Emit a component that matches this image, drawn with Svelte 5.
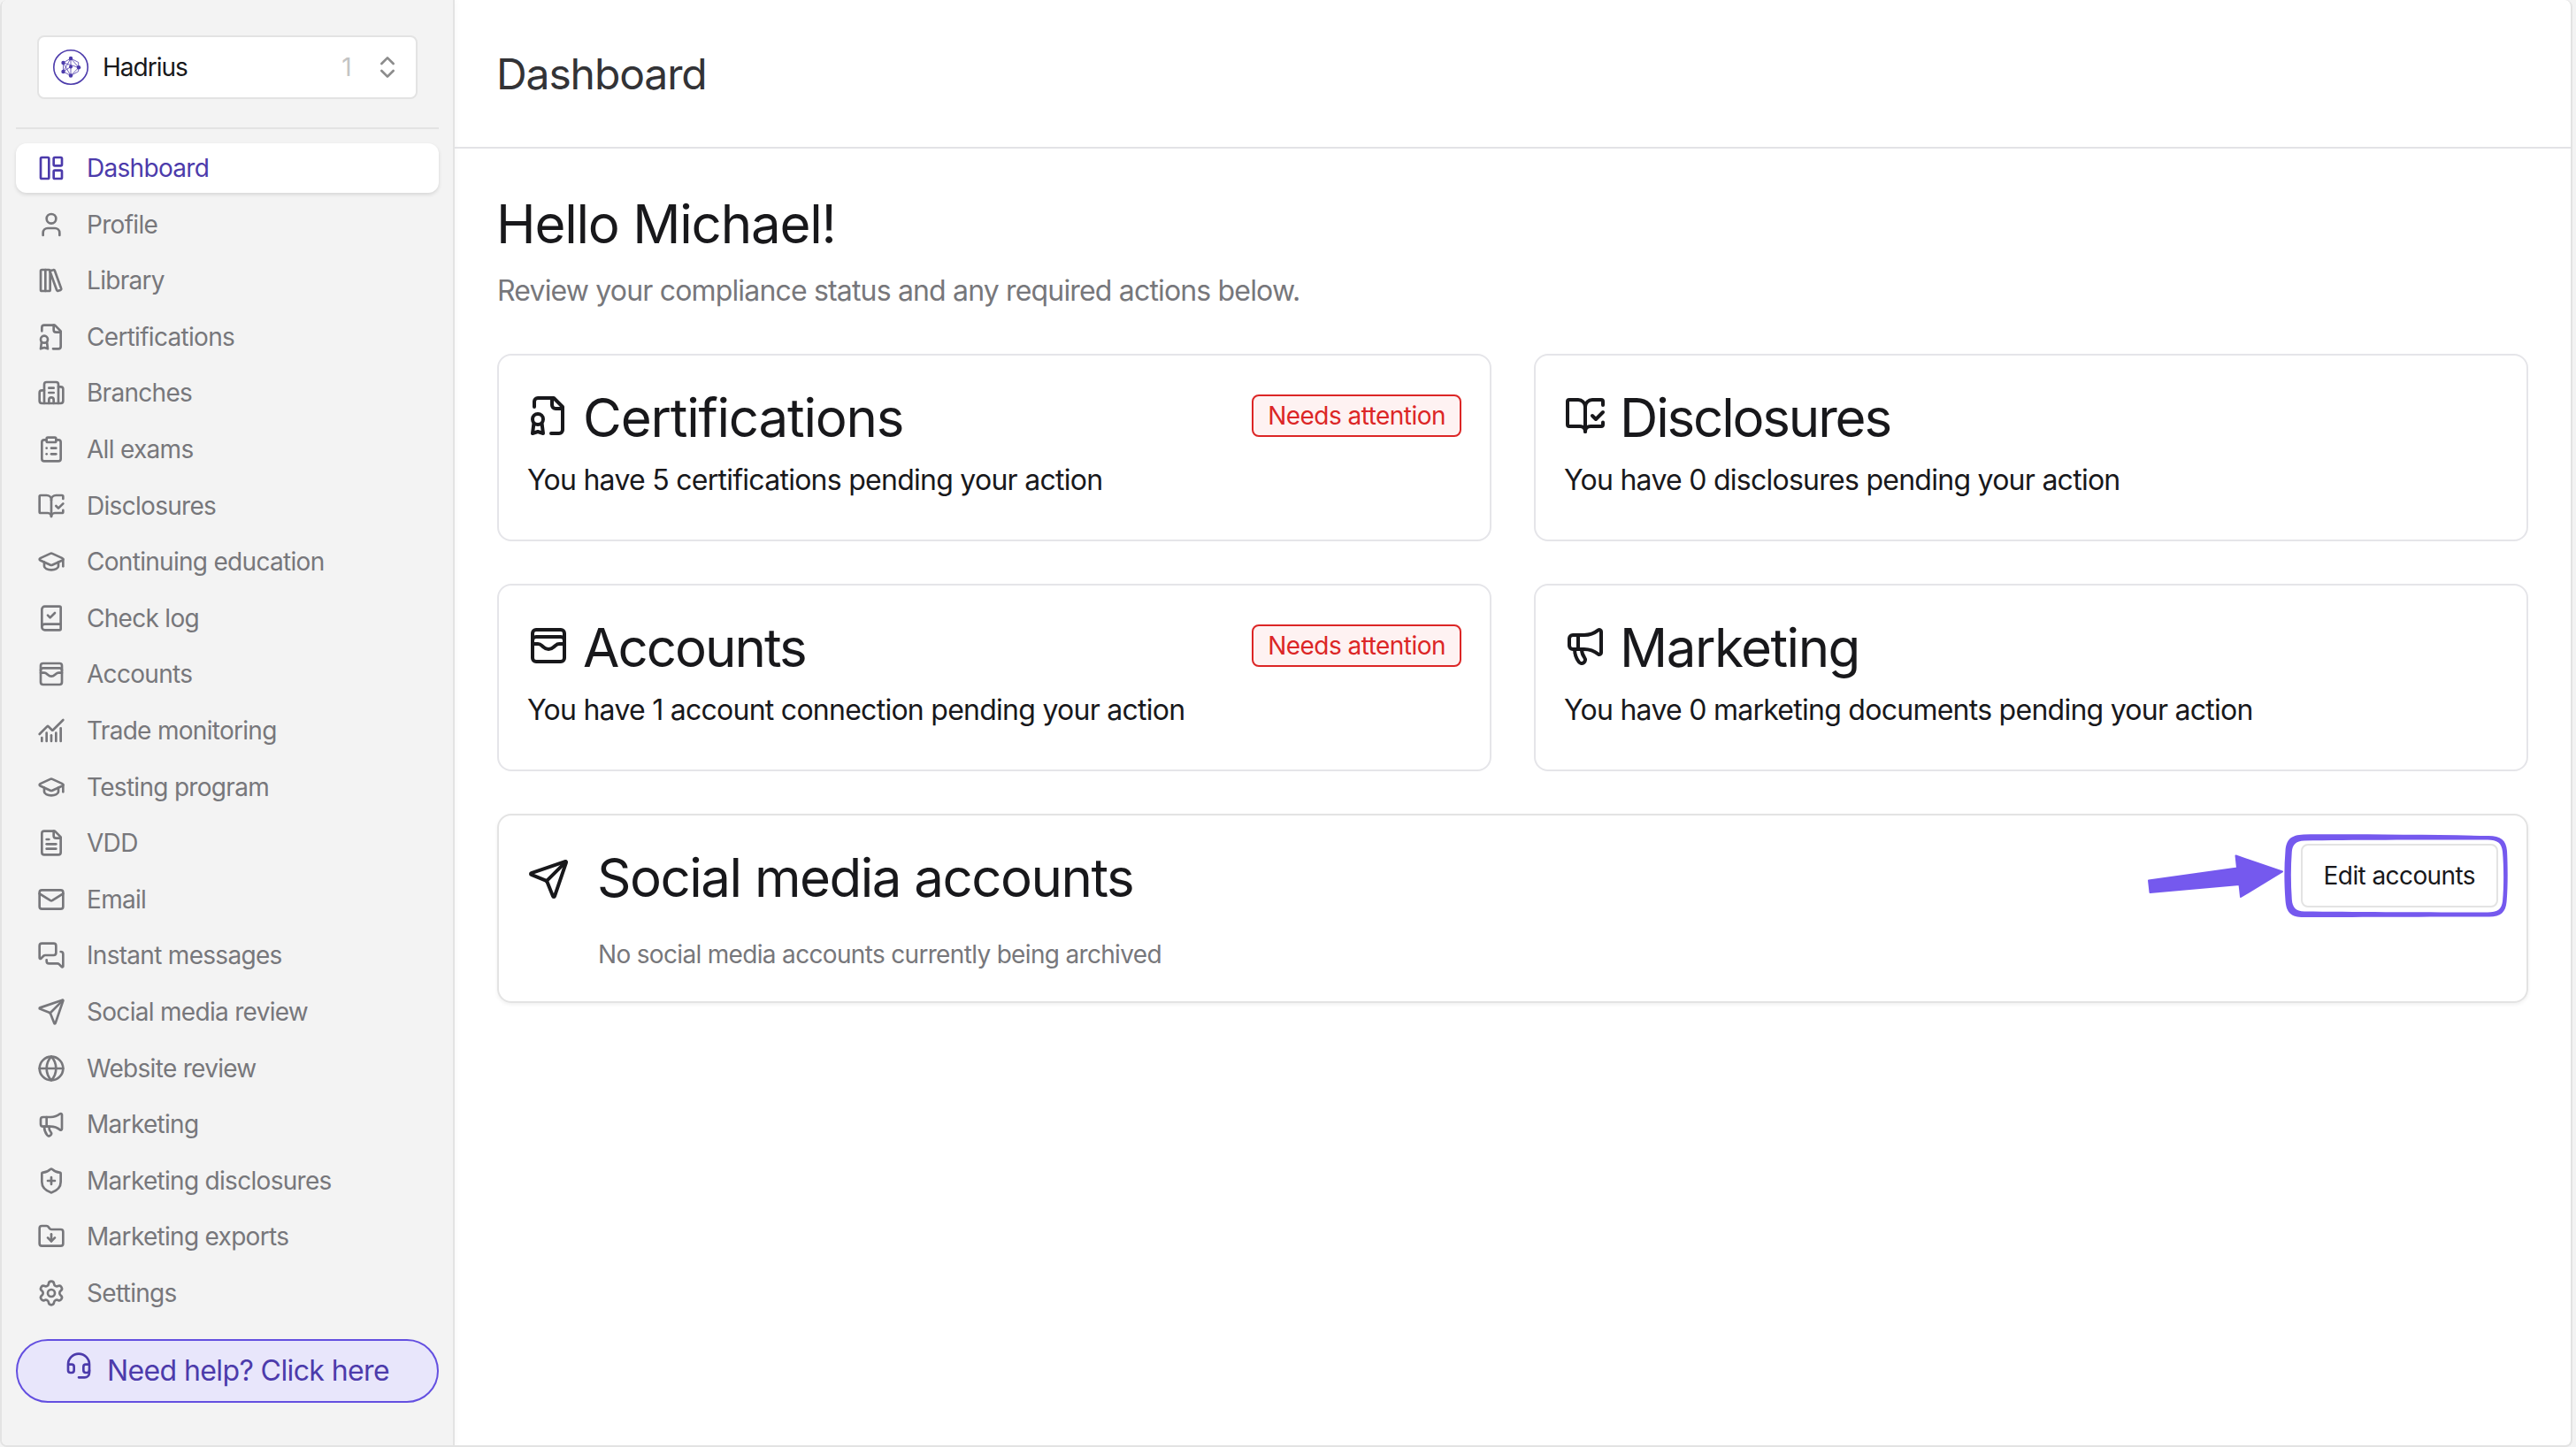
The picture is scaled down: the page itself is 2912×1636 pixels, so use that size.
<script lang="ts">
  interface NavItem {
    label: string;
    icon: string;
  }

  interface Card {
    key: string;
    title: string;
    icon: string;
    text: string;
    attention?: boolean;
  }

  const icons: Record<string, string[]> = {
    dashboard: [
      'M4 3h5a1 1 0 0 1 1 1v16a1 1 0 0 1-1 1H4a1 1 0 0 1-1-1V4a1 1 0 0 1 1-1z',
      'M15 3h5a1 1 0 0 1 1 1v5a1 1 0 0 1-1 1h-5a1 1 0 0 1-1-1V4a1 1 0 0 1 1-1z',
      'M15 14h5a1 1 0 0 1 1 1v5a1 1 0 0 1-1 1h-5a1 1 0 0 1-1-1v-5a1 1 0 0 1 1-1z',
    ],
    user: ['M19 21v-2a4 4 0 0 0-4-4H9a4 4 0 0 0-4 4v2', 'M16 7a4 4 0 1 1-8 0 4 4 0 0 1 8 0z'],
    library: [
      'M4 3h6a1 1 0 0 1 1 1v16a1 1 0 0 1-1 1H4a1 1 0 0 1-1-1V4a1 1 0 0 1 1-1z',
      'M7 3v18',
      'M20.4 18.9c.2.5-.1 1.1-.6 1.3l-1.9.7c-.5.2-1.1-.1-1.3-.6L11.1 5.1c-.2-.5.1-1.1.6-1.3l1.9-.7c.5-.2 1.1.1 1.3.6Z',
    ],
    badge: [
      'M13.5 22H18a2 2 0 0 0 2-2V7l-5-5H6a2 2 0 0 0-2 2v3',
      'M14 2v4a2 2 0 0 0 2 2h4',
      'M9 14a3 3 0 1 1-6 0 3 3 0 0 1 6 0z',
      'M8.3 16.5 9 22l-3-1-3 1 .7-5.5',
    ],
    building: [
      'M10 12h4',
      'M10 8h4',
      'M14 21v-3a2 2 0 0 0-4 0v3',
      'M6 10H4a2 2 0 0 0-2 2v7a2 2 0 0 0 2 2h16a2 2 0 0 0 2-2V9a2 2 0 0 0-2-2h-2',
      'M6 21V5a2 2 0 0 1 2-2h8a2 2 0 0 1 2 2v16',
    ],
    clipboard: [
      'M9 2h6a1 1 0 0 1 1 1v2a1 1 0 0 1-1 1H9a1 1 0 0 1-1-1V3a1 1 0 0 1 1-1z',
      'M16 4h2a2 2 0 0 1 2 2v14a2 2 0 0 1-2 2H6a2 2 0 0 1-2-2V6a2 2 0 0 1 2-2h2',
      'M12 11h4',
      'M12 16h4',
      'M8 11h.01',
      'M8 16h.01',
    ],
    bookOpen: [
      'M12 21V7',
      'm16 12 2 2 4-4',
      'M22 6V4a1 1 0 0 0-1-1h-5a4 4 0 0 0-4 4 4 4 0 0 0-4-4H3a1 1 0 0 0-1 1v13a1 1 0 0 0 1 1h6a3 3 0 0 1 3 3 3 3 0 0 1 3-3h6a1 1 0 0 0 1-1v-1.3',
    ],
    cap: [
      'M21.42 10.922a1 1 0 0 0-.019-1.838L12.83 5.18a2 2 0 0 0-1.66 0L2.6 9.08a1 1 0 0 0 0 1.832l8.57 3.908a2 2 0 0 0 1.66 0z',
      'M22 10v6',
      'M6 12.5V16a6 3 0 0 0 12 0v-3.5',
    ],
    bookCheck: [
      'M4 19.5v-15A2.5 2.5 0 0 1 6.5 2H19a1 1 0 0 1 1 1v18a1 1 0 0 1-1 1H6.5a1 1 0 0 1 0-5H20',
      'm9 9.5 2 2 4-4',
    ],
    wallet: [
      'M5 3h14a2 2 0 0 1 2 2v14a2 2 0 0 1-2 2H5a2 2 0 0 1-2-2V5a2 2 0 0 1 2-2z',
      'M3 9a2 2 0 0 1 2-2h14a2 2 0 0 1 2 2',
      'M3 11h3c.8 0 1.6.3 2.1.9l1.1.9c1.6 1.6 4.1 1.6 5.7 0l1.1-.9c.5-.5 1.3-.9 2.1-.9H21',
    ],
    chart: [
      'M12 16v5',
      'M16 14v7',
      'M20 10v11',
      'm22 3-8.646 8.646a.5.5 0 0 1-.708 0L9.354 8.354a.5.5 0 0 0-.707 0L2 15',
      'M4 18v3',
      'M8 14v7',
    ],
    file: [
      'M15 2H6a2 2 0 0 0-2 2v16a2 2 0 0 0 2 2h12a2 2 0 0 0 2-2V7Z',
      'M14 2v4a2 2 0 0 0 2 2h4',
      'M10 9H8',
      'M16 13H8',
      'M16 17H8',
    ],
    mail: [
      'M4 4h16a2 2 0 0 1 2 2v12a2 2 0 0 1-2 2H4a2 2 0 0 1-2-2V6a2 2 0 0 1 2-2z',
      'm22 7-8.991 5.727a2 2 0 0 1-2.009 0L2 7',
    ],
    messages: [
      'M16 10a2 2 0 0 1-2 2H6.828a2 2 0 0 0-1.414.586l-2.202 2.202A.71.71 0 0 1 2 14.286V4a2 2 0 0 1 2-2h10a2 2 0 0 1 2 2z',
      'M20 9a2 2 0 0 1 2 2v10.286a.71.71 0 0 1-1.212.502l-2.202-2.202A2 2 0 0 0 17.172 19H10a2 2 0 0 1-2-2v-1',
    ],
    send: [
      'M14.536 21.686a.5.5 0 0 0 .937-.024l6.5-19a.496.496 0 0 0-.635-.635l-19 6.5a.5.5 0 0 0-.024.937l7.93 3.18a2 2 0 0 1 1.112 1.11z',
      'm21.854 2.147-10.94 10.939',
    ],
    globe: [
      'M22 12a10 10 0 1 1-20 0 10 10 0 0 1 20 0z',
      'M12 2a14.5 14.5 0 0 0 0 20 14.5 14.5 0 0 0 0-20',
      'M2 12h20',
    ],
    megaphone: [
      'M11 6a13 13 0 0 0 8.4-2.8A1 1 0 0 1 21 4v12a1 1 0 0 1-1.6.8A13 13 0 0 0 11 14H5a2 2 0 0 1-2-2V8a2 2 0 0 1 2-2z',
      'M6 14a12 12 0 0 0 2.4 7.2 2 2 0 0 0 3.2-2.4A8 8 0 0 1 10 14',
      'M8 6v8',
    ],
    shield: [
      'M20 13c0 5-3.5 7.5-7.66 8.95a1 1 0 0 1-.67-.01C7.5 20.5 4 18 4 13V6a1 1 0 0 1 1-1c2 0 4.5-1.2 6.24-2.72a1.17 1.17 0 0 1 1.52 0C14.51 3.81 17 5 19 5a1 1 0 0 1 1 1z',
      'M9 12h6',
      'M12 9v6',
    ],
    folder: [
      'M20 20a2 2 0 0 0 2-2V8a2 2 0 0 0-2-2h-7.9a2 2 0 0 1-1.69-.9L9.6 3.9A2 2 0 0 0 7.93 3H4a2 2 0 0 0-2 2v13a2 2 0 0 0 2 2Z',
      'M12 10v6',
      'm15 13-3 3-3-3',
    ],
    settings: [
      'M9.671 4.136a2.34 2.34 0 0 1 4.659 0 2.34 2.34 0 0 0 3.319 1.915 2.34 2.34 0 0 1 2.33 4.033 2.34 2.34 0 0 0 0 3.831 2.34 2.34 0 0 1-2.33 4.033 2.34 2.34 0 0 0-3.319 1.915 2.34 2.34 0 0 1-4.659 0 2.34 2.34 0 0 0-3.32-1.915 2.34 2.34 0 0 1-2.33-4.033 2.34 2.34 0 0 0 0-3.831A2.34 2.34 0 0 1 6.35 6.051a2.34 2.34 0 0 0 3.319-1.915',
      'M15 12a3 3 0 1 1-6 0 3 3 0 0 1 6 0z',
    ],
    headset: [
      'M3 11h3a2 2 0 0 1 2 2v3a2 2 0 0 1-2 2H5a2 2 0 0 1-2-2v-5Zm0 0a9 9 0 1 1 18 0m0 0v5a2 2 0 0 1-2 2h-1a2 2 0 0 1-2-2v-3a2 2 0 0 1 2-2h3Z',
      'M21 16v2a4 4 0 0 1-4 4h-5',
    ],
    chevrons: ['m7 15 5 5 5-5', 'm7 9 5-5 5 5'],
  };

  const navItems: NavItem[] = [
    { label: 'Dashboard', icon: 'dashboard' },
    { label: 'Profile', icon: 'user' },
    { label: 'Library', icon: 'library' },
    { label: 'Certifications', icon: 'badge' },
    { label: 'Branches', icon: 'building' },
    { label: 'All exams', icon: 'clipboard' },
    { label: 'Disclosures', icon: 'bookOpen' },
    { label: 'Continuing education', icon: 'cap' },
    { label: 'Check log', icon: 'bookCheck' },
    { label: 'Accounts', icon: 'wallet' },
    { label: 'Trade monitoring', icon: 'chart' },
    { label: 'Testing program', icon: 'cap' },
    { label: 'VDD', icon: 'file' },
    { label: 'Email', icon: 'mail' },
    { label: 'Instant messages', icon: 'messages' },
    { label: 'Social media review', icon: 'send' },
    { label: 'Website review', icon: 'globe' },
    { label: 'Marketing', icon: 'megaphone' },
    { label: 'Marketing disclosures', icon: 'shield' },
    { label: 'Marketing exports', icon: 'folder' },
    { label: 'Settings', icon: 'settings' },
  ];

  const cards: Card[] = [
    {
      key: 'certifications',
      title: 'Certifications',
      icon: 'badge',
      text: 'You have 5 certifications pending your action',
      attention: true,
    },
    {
      key: 'disclosures',
      title: 'Disclosures',
      icon: 'bookOpen',
      text: 'You have 0 disclosures pending your action',
    },
    {
      key: 'accounts',
      title: 'Accounts',
      icon: 'wallet',
      text: 'You have 1 account connection pending your action',
      attention: true,
    },
    {
      key: 'marketing',
      title: 'Marketing',
      icon: 'megaphone',
      text: 'You have 0 marketing documents pending your action',
    },
  ];

  let active = $state('Dashboard');
</script>

{#snippet icon(name: string, size: number)}
  <svg class="icon" width={size} height={size} viewBox="0 0 24 24">
    {#each icons[name] as d}
      <path {d} />
    {/each}
  </svg>
{/snippet}

<div class="app">
  <aside class="sidebar">
    <button class="org">
      <svg class="logo" width="40" height="40" viewBox="0 0 40 40">
        <circle class="ring" cx="20" cy="20" r="19.2" />
        <path class="mesh" d="M20 10 11.5 15v10l8.5 4.5 8.7-4.8V14.5zM20 10v19.5M20 10l9 10.3-9 9.2M11.5 15l17.5 5.3M11.5 25 20 10M11.5 15 20 29.5M11.5 25l8.5-5.5" />
        <circle cx="20" cy="10" r="2.2" />
        <circle cx="11.5" cy="15" r="2.2" />
        <circle cx="11.5" cy="25" r="2.2" />
        <circle cx="20" cy="29.5" r="2.2" />
        <circle cx="29" cy="20.3" r="2.2" />
        <circle cx="20" cy="19.5" r="2" />
      </svg>
      <span class="org-name">Hadrius</span>
      <span class="org-count">1</span>
      {@render icon('chevrons', 32)}
    </button>

    <nav class="nav">
      {#each navItems as item (item.label)}
        <button
          class="nav-item"
          class:active={active === item.label}
          onclick={() => (active = item.label)}
        >
          {@render icon(item.icon, 32)}
          <span>{item.label}</span>
        </button>
      {/each}
    </nav>

    <button class="help">
      {@render icon('headset', 32)}
      <span>Need help? Click here</span>
    </button>
  </aside>

  <div class="page">
    <header class="topbar">
      <h1>Dashboard</h1>
    </header>

    <main class="content">
      <h2 class="greeting">Hello Michael!</h2>
      <p class="intro">Review your compliance status and any required actions below.</p>

      <div class="cards">
        {#each cards as card (card.key)}
          <section class="card">
            <div class="card-head">
              {@render icon(card.icon, 48)}
              <h3 class="card-title {card.key}">{card.title}</h3>
              {#if card.attention}
                <span class="attention">Needs attention</span>
              {/if}
            </div>
            <p class="card-text">{card.text}</p>
          </section>
        {/each}

        <section class="card social">
          <div class="social-head">
            {@render icon('send', 48)}
            <h3 class="card-title">Social media accounts</h3>
            <button class="edit">Edit accounts</button>
          </div>
          <p class="social-text">No social media accounts currently being archived</p>

          <!-- hand-drawn arrow and frame around the edit button -->
          <svg class="callout" width="420" height="110" viewBox="0 0 420 110">
            <path
              class="arrow"
              d="M9 57.5 109 43.5 107.5 29.5 160 47.5 113 76 111.5 62 10.5 71z"
            />
            <path
              fill-rule="evenodd"
              d="M184 5.500 C240 5 330 6 393 7 C407 7 413 12 414 24 C415 42 415 66 413.500 82 C412.500 93 407 98.500 394 98.500 C330 98.500 240 99 184 99 C170 99 164.500 94 163.500 80 C162 60 162 42 163.500 24 C164.500 11 170 6 184 5.500 Z M185 12.500 C240 11.500 330 11.500 392 11.500 C403 11.500 408 15 409 25 C410.500 42 410.500 66 409 81 C408 90 403 93.500 392 93.500 C330 93.500 240 93 185 92.500 C175 92 171.500 88 170.800 79 C169.500 60 169.500 42 170.800 25 C171.500 17 175 13 185 12.500 Z"
            />
          </svg>
        </section>
      </div>
    </main>
  </div>
</div>

<style>
  :global(body) {
    margin: 0;
    background: #f3f3f3;
  }

  .app {
    display: flex;
    box-sizing: border-box;
    width: 2908px;
    height: 1636px;
    border: 2px solid #e3e3e3;
    border-top: none;
    border-radius: 8px;
    overflow: hidden;
    background: #fff;
    color: #18181b;
    font-family: Inter, 'Liberation Sans', sans-serif;
    font-size: 28px;
    letter-spacing: -0.7px;
  }

  button {
    margin: 0;
    font: inherit;
    letter-spacing: inherit;
    color: inherit;
    text-align: left;
    cursor: pointer;
  }

  h1,
  h2,
  h3,
  p {
    margin: 0;
    font-weight: 400;
  }

  .icon {
    flex-shrink: 0;
    fill: none;
    stroke: currentColor;
    stroke-width: 2;
    stroke-linecap: round;
    stroke-linejoin: round;
  }

  .sidebar {
    display: flex;
    flex-direction: column;
    box-sizing: border-box;
    flex-shrink: 0;
    width: 512px;
    padding: 40px 16px 0;
    border-right: 2px solid #e3e3e3;
    background: #f3f3f3;
    box-shadow: 0 0 8px rgba(0, 0, 0, 0.05);
  }

  .org {
    display: flex;
    align-items: center;
    box-sizing: border-box;
    height: 72px;
    margin: 0 24px 32px;
    padding: 0 16px;
    border: 2px solid #e3e3e3;
    border-radius: 8px;
    background: #fff;
  }

  .logo {
    flex-shrink: 0;
    fill: #4c3bab;
  }

  .ring,
  .mesh {
    fill: none;
    stroke: #4c3bab;
    stroke-width: 1.6;
  }

  .mesh {
    stroke-width: 0.8;
  }

  .org-name {
    flex: 1;
    margin-left: 16px;
    letter-spacing: -0.035em;
  }

  .org-count {
    margin-right: 25px;
    color: #c4c4c4;
  }

  .org .icon {
    color: #8c8c8c;
  }

  .nav {
    display: flex;
    flex-direction: column;
    gap: 7.6px;
    padding-top: 16px;
    border-top: 2px solid #e3e3e3;
  }

  .nav-item {
    display: flex;
    align-items: center;
    gap: 24px;
    height: 56px;
    padding: 0 24px;
    border: none;
    border-radius: 12px;
    background: none;
    color: #77777b;
  }

  .nav-item.active {
    background: #fff;
    color: #4c3bab;
    box-shadow: 0 2px 4px rgba(0, 0, 0, 0.12);
  }

  .help {
    display: flex;
    align-items: center;
    box-sizing: border-box;
    gap: 16px;
    height: 72px;
    margin-top: 24px;
    padding: 0 53px;
    border: 2px solid #634fe0;
    border-radius: 36px;
    background: #e8e6fb;
    color: #4c3bab;
    font-size: 32px;
    letter-spacing: -0.019em;
  }

  .help .icon {
    margin-bottom: 12px;
  }

  .page {
    flex: 1;
    min-width: 0;
  }

  .topbar {
    display: flex;
    align-items: center;
    box-sizing: border-box;
    height: 168px;
    padding: 2px 48px 0;
    border-bottom: 2px solid #e3e3e6;
  }

  h1 {
    margin-left: -1px;
    color: #333336;
    font-size: 48px;
    line-height: 60px;
    letter-spacing: -0.023em;
  }

  .content {
    padding: 48px;
  }

  .greeting {
    margin-left: -1px;
    font-size: 60px;
    line-height: 75px;
    letter-spacing: -0.02em;
  }

  .intro {
    margin: 14px 0 47px;
    color: #77777b;
    font-size: 32px;
    line-height: 48px;
    letter-spacing: -0.026em;
  }

  .cards {
    display: grid;
    grid-template-columns: 1fr 1fr;
    gap: 48px;
  }

  .card {
    box-sizing: border-box;
    height: 212px;
    padding: 44px 32px;
    border: 2px solid #e5e5e9;
    border-radius: 16px;
  }

  .card-head,
  .social-head {
    display: flex;
    align-items: center;
    gap: 16px;
    height: 48px;
  }

  .card-title {
    flex: 1;
    margin: 3px 0 0 -1px;
    font-size: 60px;
    line-height: 48px;
    letter-spacing: -0.025em;
  }

  .certifications {
    letter-spacing: -0.02em;
  }

  .disclosures {
    letter-spacing: -0.036em;
  }

  .accounts {
    letter-spacing: -0.033em;
  }

  .card-text {
    margin-top: 25px;
    font-size: 32px;
    line-height: 48px;
    letter-spacing: -0.023em;
  }

  .attention {
    display: flex;
    align-items: center;
    box-sizing: border-box;
    height: 48px;
    padding: 0 16px;
    border: 2px solid #dc2626;
    border-radius: 8px;
    background: #fef2f2;
    color: #dc2626;
    letter-spacing: -0.019em;
  }

  .social {
    position: relative;
    grid-column: 1 / -1;
    height: 214px;
    padding-top: 32px;
    border-color: #e3e3e3;
    box-shadow: 0 2px 4px rgba(0, 0, 0, 0.06);
  }

  .social-head {
    gap: 32px;
    height: 72px;
  }

  .social-head .icon {
    margin-top: 8px;
  }

  .edit {
    box-sizing: border-box;
    height: 72px;
    padding: 0 24px;
    border: 2px solid #e3e3e3;
    border-radius: 8px;
    background: #fff;
    letter-spacing: -0.021em;
  }

  .social-text {
    margin: 33px 0 0 80px;
    color: #77777b;
    line-height: 40px;
    letter-spacing: -0.024em;
  }

  .callout {
    position: absolute;
    top: 16px;
    right: 16px;
    fill: #7559ee;
    pointer-events: none;
  }

  .arrow {
    stroke: #7559ee;
    stroke-width: 2;
    stroke-linejoin: round;
  }
</style>
